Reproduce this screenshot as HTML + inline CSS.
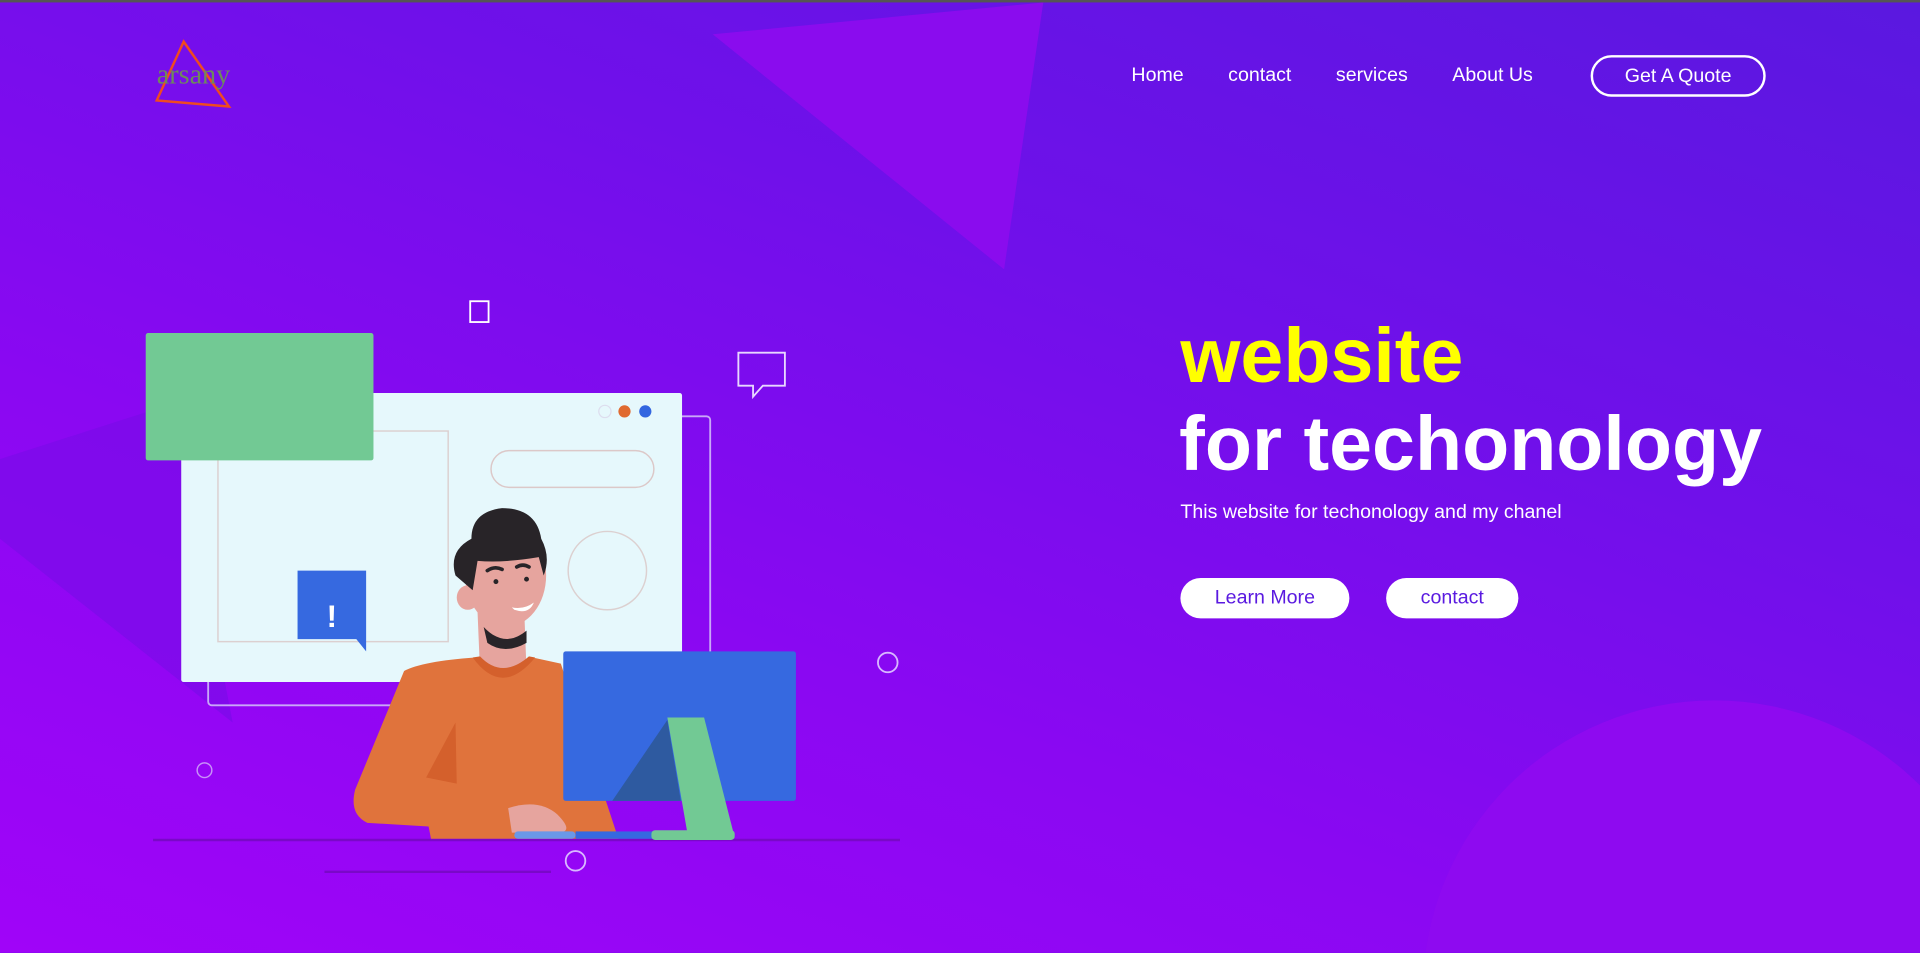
<!DOCTYPE html>
<html><head><meta charset="utf-8"><style>
html,body{margin:0;padding:0;width:1920px;height:953px;overflow:hidden;background:#7a10ea}
#w{position:absolute;left:0;top:0;width:1568px;height:778px;transform:scale(1.22449);transform-origin:0 0;overflow:hidden;
background:linear-gradient(200deg,#5a18e0 0%,#7010ea 35%,#8a08f2 65%,#a004f8 100%);font-family:"Liberation Sans",Arial,sans-serif}
.a{position:absolute}
nav a{position:absolute;top:53px;color:#fff;font-size:16px;text-decoration:none}
</style></head><body><div id="w">
<div class="a" style="left:0;top:0;width:1568px;height:2px;background:#555"></div>
<svg class="a" style="left:0;top:0" width="1568" height="778">
<polygon points="582,28 852,2 820,220" fill="#8a0cee"/>
<polygon points="0,375 140,330 190,590 0,440" fill="#7a0ce8" opacity=".7"/>
<circle cx="1400" cy="810" r="238" fill="#8e0af0"/>
<polygon points="150,34 128,82 187,87" fill="none" stroke="#f04a20" stroke-width="2"/>
<text x="128" y="68" font-family="Liberation Serif,serif" font-size="23" fill="#6e8a5c">arsany</text>
<rect x="384" y="246" width="15" height="17" fill="none" stroke="#fff" stroke-width="1.5"/>
<path d="M603,288 h38 v27 h-18 l-8,9 v-9 h-12 z" fill="none" stroke="#e8d8ff" stroke-width="1.5"/>
<circle cx="725" cy="541" r="8" fill="none" stroke="#d8b8ff" stroke-width="1.5"/>
<circle cx="167" cy="629" r="6" fill="none" stroke="#c890f8" stroke-width="1.2"/>
<circle cx="470" cy="703" r="8" fill="none" stroke="#d8b8ff" stroke-width="1.5"/>
<line x1="125" y1="686" x2="735" y2="686" stroke="#7a08c8" stroke-width="2"/>
<line x1="265" y1="712" x2="450" y2="712" stroke="#7a08c8" stroke-width="2"/>
<rect x="170" y="340" width="410" height="236" rx="3" fill="none" stroke="#c9a8f8" stroke-width="1.5"/>
<rect x="148" y="321" width="409" height="236" rx="2" fill="#e6f8fc"/>
<rect x="178" y="352" width="188" height="172" fill="none" stroke="#dcd0d0" stroke-width="1.2"/>
<rect x="401" y="368" width="133" height="30" rx="15" fill="none" stroke="#dcc8c8" stroke-width="1.2"/>
<circle cx="496" cy="466" r="32" fill="none" stroke="#dcd0d0" stroke-width="1.2"/>
<circle cx="494" cy="336" r="5" fill="none" stroke="#dde" stroke-width="1"/>
<circle cx="510" cy="336" r="5" fill="#e06a30"/>
<circle cx="527" cy="336" r="5" fill="#3366e0"/>
<rect x="119" y="272" width="186" height="104" rx="2" fill="#72c994"/>
<path d="M243,466 h56 v66 l-8,-10 h-48 z" fill="#3669e0"/>
<text x="271" y="512" text-anchor="middle" font-size="26" font-weight="bold" fill="#fff">!</text>
<path d="M390,500 L392,548 Q410,565 430,548 L428,495 Z" fill="#e6a49e"/>
<path d="M330,548 Q345,540 388,537 Q410,565 435,537 L458,542 L505,685 L352,685 L350,675 L300,672 Q285,665 290,645 Z" fill="#e0733c"/>
<path d="M386,537 Q410,570 437,537 L432,536 Q410,555 392,536 Z" fill="#d4602c"/>
<path d="M372,590 L348,635 L373,640 Z" fill="#d4602c"/>
<path d="M415,660 Q440,652 455,665 Q470,680 455,680 L418,680 Z" fill="#e6a49e"/>
<ellipse cx="413" cy="470" rx="33" ry="42" fill="#e6a49e"/>
<ellipse cx="382" cy="488" rx="9" ry="10" fill="#e6a49e"/>
<path d="M395,512 Q412,530 430,515 L430,525 Q412,535 398,525 Z" fill="#282428"/>
<path d="M372,470 Q366,450 385,440 Q385,418 410,415 Q438,415 442,440 Q450,455 444,470 L440,455 Q410,460 390,458 L386,482 Z" fill="#282428"/>
<path d="M398,466 q6,-4 12,-1 M422,463 q5,-3 10,0" stroke="#282428" stroke-width="3" fill="none" stroke-linecap="round"/>
<circle cx="405" cy="475" r="2" fill="#282428"/><circle cx="430" cy="473" r="2" fill="#282428"/>
<path d="M418,496 q10,2 18,-4 q-4,10 -16,6 z" fill="#fff"/>
<rect x="460" y="532" width="190" height="122" rx="2" fill="#3669e0"/>
<polygon points="500,654 545,588 556,654" fill="#2e5aa0"/>
<polygon points="545,586 575,586 600,684 562,684" fill="#72c994"/>
<rect x="420" y="679" width="50" height="6" rx="3" fill="#6a98e8"/>
<rect x="470" y="679" width="80" height="6" fill="#3669e0"/>
<rect x="532" y="678" width="68" height="8" rx="3" fill="#72c994"/>
</svg>
<nav>
<a style="left:924px">Home</a><a style="left:1003px">contact</a><a style="left:1091px">services</a><a style="left:1186px">About Us</a>
</nav>
<div class="a" style="left:1299px;top:45px;width:139px;height:30px;border:2px solid #fff;border-radius:17px;color:#fff;font-size:16px;line-height:31px;text-align:center">Get A Quote</div>
<div class="a" style="left:964px;top:256px;font-size:63px;font-weight:bold;color:#ffff00;line-height:70px">website</div>
<div class="a" style="left:963px;top:328px;font-size:63px;font-weight:bold;color:#fff;line-height:70px">for techonology</div>
<div class="a" style="left:964px;top:410px;font-size:16px;color:#fff">This website for techonology and my chanel</div>
<div class="a" style="left:964px;top:472px;width:138px;height:33px;border-radius:17px;background:#fff;color:#5a1ae0;font-size:16px;line-height:34px;text-align:center">Learn More</div>
<div class="a" style="left:1132px;top:472px;width:108px;height:33px;border-radius:17px;background:#fff;color:#5a1ae0;font-size:16px;line-height:34px;text-align:center">contact</div>
</div></body></html>
